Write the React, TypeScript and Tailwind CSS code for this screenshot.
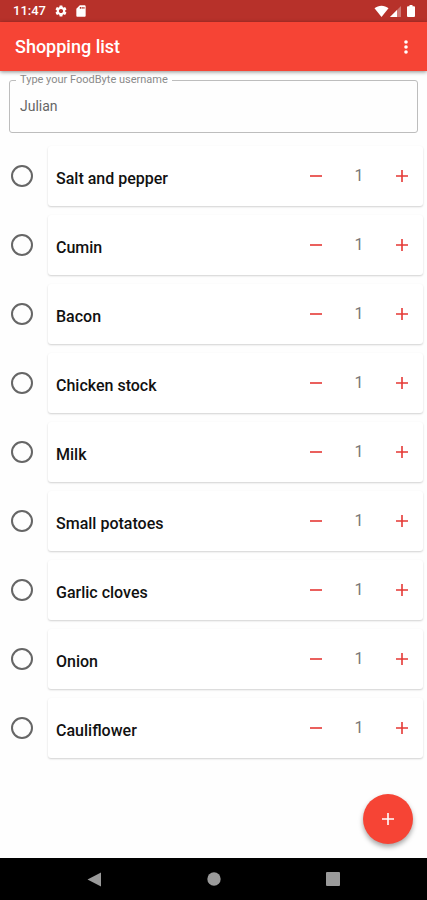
import { useState } from "react";

const INITIAL_ITEMS = [
  "Salt and pepper",
  "Cumin",
  "Bacon",
  "Chicken stock",
  "Milk",
  "Small potatoes",
  "Garlic cloves",
  "Onion",
  "Cauliflower",
];

function StatusBar() {
  return (
    <div className="flex h-[22px] items-center bg-[#b7312a] pr-3 pl-[13px] text-white">
      <span className="text-[13px] leading-5 font-medium">11:47</span>
      <svg className="ml-2 size-[14px]" viewBox="0 0 24 24" fill="currentColor" aria-hidden="true">
        <path d="M19.14 12.94c.04-.3.06-.61.06-.94 0-.32-.02-.64-.07-.94l2.03-1.58a.49.49 0 0 0 .12-.61l-1.92-3.32a.488.488 0 0 0-.59-.22l-2.39.96c-.5-.38-1.03-.7-1.62-.94l-.36-2.54a.484.484 0 0 0-.48-.41h-3.84c-.24 0-.43.17-.47.41l-.36 2.54c-.59.24-1.13.57-1.62.94l-2.39-.96c-.22-.08-.47 0-.59.22L2.74 8.87c-.12.21-.08.47.12.61l2.03 1.58c-.05.3-.09.63-.09.94s.02.64.07.94l-2.03 1.58a.49.49 0 0 0-.12.61l1.92 3.32c.12.22.37.29.59.22l2.39-.96c.5.38 1.03.7 1.62.94l.36 2.54c.05.24.24.41.48.41h3.84c.24 0 .44-.17.47-.41l.36-2.54c.59-.24 1.13-.56 1.62-.94l2.39.96c.22.08.47 0 .59-.22l1.92-3.32c.12-.22.07-.47-.12-.61l-2.01-1.58zM12 15.6c-1.98 0-3.6-1.62-3.6-3.6s1.62-3.6 3.6-3.6 3.6 1.62 3.6 3.6-1.62 3.6-3.6 3.6z" />
      </svg>
      <svg className="ml-[6px] size-[14px]" viewBox="0 0 24 24" fill="currentColor" aria-hidden="true">
        <path d="M18 2h-8L4 8v12c0 1.1.9 2 2 2h12c1.1 0 2-.9 2-2V4c0-1.1-.9-2-2-2zm-6 6h-2V5h2v3zm3 0h-2V5h2v3zm3 0h-2V5h2v3z" />
      </svg>
      <svg className="ml-auto h-3 w-[15px]" viewBox="0 0 15 12" fill="currentColor" aria-hidden="true">
        <path d="M0.5 3.200C4.5-0.2 10.5-0.2 14.5 3.200L7.5 12z" />
      </svg>
      <svg className="ml-px size-[11px]" viewBox="0 0 11 11" fill="currentColor" aria-hidden="true">
        <path d="M0 11L11 0V11z" opacity="0.35" />
        <path d="M0 11L7 4V11z" />
      </svg>
      <svg className="ml-[6px] h-3 w-2" viewBox="0 0 8 12" fill="currentColor" aria-hidden="true">
        <path d="M2.5 0h3v1.200H7a1 1 0 0 1 1 1V11a1 1 0 0 1-1 1H1a1 1 0 0 1-1-1V2.200a1 1 0 0 1 1-1h1.500z" />
      </svg>
    </div>
  );
}

function PlusIcon() {
  return (
    <svg className="size-[14px]" viewBox="0 0 14 14" stroke="currentColor" strokeWidth="1.6" aria-hidden="true">
      <path d="M1 7H13M7 1V13" />
    </svg>
  );
}

function MinusIcon() {
  return (
    <svg className="size-[14px]" viewBox="0 0 14 14" stroke="currentColor" strokeWidth="1.6" aria-hidden="true">
      <path d="M1 7H13" />
    </svg>
  );
}

function ItemRow({ name }: { name: string }) {
  const [count, setCount] = useState(1);
  const id = "item-" + name.toLowerCase().replaceAll(" ", "-");
  return (
    <li className="flex items-center">
      <input
        id={id}
        type="checkbox"
        className="mr-[15px] ml-[11px] size-[22px] shrink-0 appearance-none rounded-full border-2 border-[#666] checked:bg-[#f44336]"
      />
      <div className="flex h-[60px] flex-1 items-center rounded-[3px] bg-white pr-[7px] pl-2 shadow-[0_1px_2px_rgba(0,0,0,0.18)]">
        <label htmlFor={id} className="flex-1 pt-[6px] text-base leading-5 font-medium text-[#111]">
          {name}
        </label>
        <button
          type="button"
          aria-label={"Less " + name}
          onClick={() => setCount(Math.max(0, count - 1))}
          className="flex size-7 items-center justify-center text-[#e53935]"
        >
          <MinusIcon />
        </button>
        <span className="w-[58px] text-center text-base leading-5 text-[#777]">{count}</span>
        <button
          type="button"
          aria-label={"More " + name}
          onClick={() => setCount(count + 1)}
          className="flex size-7 items-center justify-center text-[#e53935]"
        >
          <PlusIcon />
        </button>
      </div>
    </li>
  );
}

function NavigationBar() {
  return (
    <nav className="flex h-[42px] items-center justify-center gap-[91px] bg-black text-[#9a9a9a]">
      <button type="button" aria-label="Back" className="flex size-7 items-center justify-center">
        <svg className="size-[15px]" viewBox="0 0 15 15" fill="currentColor" aria-hidden="true">
          <path d="M0.5 7.5L14 0.5V14.5z" />
        </svg>
      </button>
      <button type="button" aria-label="Home" className="flex size-7 items-center justify-center">
        <svg className="size-[14px]" viewBox="0 0 14 14" fill="currentColor" aria-hidden="true">
          <circle cx="7" cy="7" r="6.7" />
        </svg>
      </button>
      <button type="button" aria-label="Recent apps" className="flex size-7 items-center justify-center">
        <svg className="size-[14px]" viewBox="0 0 14 14" fill="currentColor" aria-hidden="true">
          <rect width="14" height="14" rx="1" />
        </svg>
      </button>
    </nav>
  );
}

export default function App() {
  const [username, setUsername] = useState("Julian");
  return (
    <div className="flex min-h-screen flex-col bg-[#fefefe] font-[Roboto,sans-serif]">
      <StatusBar />
      <header className="flex h-[49px] items-center justify-between bg-[#f64435] pr-[7px] pl-[15px] text-white shadow-[0_1px_4px_rgba(0,0,0,0.45)]">
        <h1 className="pt-px text-lg font-medium">Shopping list</h1>
        <button type="button" aria-label="More options" className="flex size-7 items-center justify-center">
          <svg className="h-4 w-1" viewBox="0 0 4 16" fill="currentColor" aria-hidden="true">
            <circle cx="2" cy="3" r="1.8" />
            <circle cx="2" cy="8" r="1.8" />
            <circle cx="2" cy="13" r="1.8" />
          </svg>
        </button>
      </header>
      <main className="relative flex-1">
        <fieldset className="mx-[9px] mt-[3px] rounded-[3px] border border-[#bdbdbd] px-[6px]">
          <legend className="px-1 text-[11px] leading-3 text-[#8a8a8a]">
            <label htmlFor="username">Type your FoodByte username</label>
          </legend>
          <input
            id="username"
            value={username}
            onChange={(event) => setUsername(event.target.value)}
            className="mb-[6px] block h-10 w-full px-1 text-sm text-[#666] outline-none"
          />
        </fieldset>
        <ul className="mt-[13px] flex flex-col gap-[9px] pr-1">
          {INITIAL_ITEMS.map((name) => (
            <ItemRow key={name} name={name} />
          ))}
        </ul>
        <button
          type="button"
          aria-label="Add item"
          className="absolute right-[14px] bottom-[14px] flex size-[50px] items-center justify-center rounded-full bg-[#f64435] text-white shadow-[0_3px_5px_rgba(0,0,0,0.35)]"
        >
          <PlusIcon />
        </button>
      </main>
      <NavigationBar />
    </div>
  );
}
